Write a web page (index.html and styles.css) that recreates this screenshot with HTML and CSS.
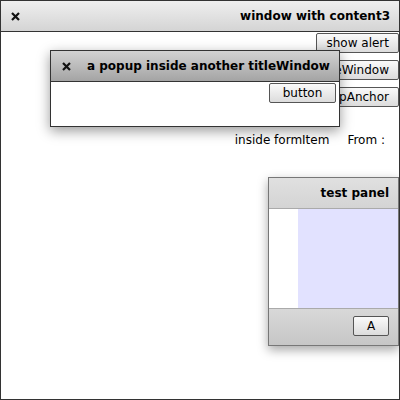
FILE: index.html
```html
<!DOCTYPE html>
<html>
<head>
<meta charset="utf-8">
<link rel="stylesheet" href="styles.css">
</head>
<body>
<div class="win">
  <div class="titlebar main-title">
    <svg class="close" width="9" height="9" viewBox="0 0 9 9"><path d="M1 1L8 8M8 1L1 8" stroke="#111" stroke-width="2.2"/></svg>
    <span class="title">window with content3</span>
  </div>
  <div class="content">
    <div class="btns">
      <button class="btn">show alert</button>
      <button class="btn">show titleWindow</button>
      <button class="btn">show popUpAnchor</button>
    </div>
    <div class="formitem">
      <span class="fi-label">inside formItem</span>
      <span class="fi-from">From :</span>
    </div>
    <div class="panel">
      <div class="panel-title">test panel</div>
      <div class="panel-body"><div class="lav"></div></div>
      <div class="panel-foot"><button class="btn btn-a">A</button></div>
    </div>
  </div>
  <div class="popup">
    <div class="titlebar pop-title">
      <svg class="close" width="9" height="9" viewBox="0 0 9 9"><path d="M1 1L8 8M8 1L1 8" stroke="#111" stroke-width="2.2"/></svg>
      <span class="pop-text">a popup inside another titleWindow</span>
    </div>
    <div class="pop-body">
      <button class="btn">button</button>
    </div>
  </div>
</div>
</body>
</html>
```
FILE: styles.css
```css
html, body { margin: 0; padding: 0; background: #fff; }
body { font-family: "DejaVu Sans", sans-serif; font-size: 12px; color: #000; }
.win {
  position: relative;
  width: 400px; height: 400px; box-sizing: border-box;
  border: 1px solid #333;
  background: #fff;
  overflow: hidden;
}
.titlebar {
  display: flex; align-items: center;
  height: 30px; box-sizing: border-box;
  border-bottom: 1px solid #333;
}
.main-title {
  height: 31px;
  background: linear-gradient(#efefef, #d4d4d4);
  padding: 0 9px 0 10px;
}
.close { flex: none; }
.main-title .title { margin-left: auto; font-weight: bold; font-size: 12px; }
.content {
  display: flex; flex-direction: column; align-items: flex-end;
}
.btns {
  display: flex; flex-direction: column; align-items: flex-end; gap: 7px;
  padding-top: 1px;
}
.btn {
  font-family: "DejaVu Sans", sans-serif; font-size: 12px; color: #000;
  height: 20px; box-sizing: border-box;
  padding: 0 9px;
  border: 1px solid #555; border-radius: 2px;
  background: linear-gradient(#fafafa, #dcdcdc);
  line-height: 18px;
}
.formitem {
  display: flex; gap: 18px;
  margin-top: 25px; margin-right: 14px;
  height: 16px; line-height: 16px;
}
.panel {
  margin-top: 29px;
  width: 131px; height: 169px; box-sizing: border-box;
  border: 1px solid #777;
  display: flex; flex-direction: column;
  box-shadow: 0 4px 10px rgba(0,0,0,0.35);
  background: #fff;
}
.panel-title {
  height: 31px; box-sizing: border-box; flex: none;
  background: linear-gradient(#e0e0e0, #d4d4d4);
  border-bottom: 1px solid #aaa;
  font-weight: bold;
  display: flex; align-items: center; justify-content: flex-end;
  padding-right: 9px;
}
.panel-body { flex: 1; display: flex; padding-left: 29px; }
.lav { flex: 1; background: #e2e2ff; }
.panel-foot {
  height: 37px; box-sizing: border-box; flex: none;
  border-top: 1px solid #aaa;
  background: linear-gradient(#d8d8d8, #c6c6c6);
  display: flex; align-items: flex-start; justify-content: flex-end;
  padding: 7px 9px 0 0;
}
.btn-a { width: 36px; padding: 0; }
.popup {
  position: absolute; left: 49px; top: 49px;
  width: 290px; height: 77px; box-sizing: border-box;
  border: 1px solid #333;
  background: #fff;
  box-shadow: 0 4px 12px rgba(0,0,0,0.4);
  display: flex; flex-direction: column;
}
.pop-title {
  height: 31px;
  background: linear-gradient(#d2d2d2, #a4a4a4);
  padding-left: 11px;
}
.pop-text { font-weight: bold; margin-left: 16px; }
.pop-body { display: flex; justify-content: flex-end; padding-right: 3px; padding-top: 1px; }
.pop-body .btn { width: 67px; padding: 0; }
```
